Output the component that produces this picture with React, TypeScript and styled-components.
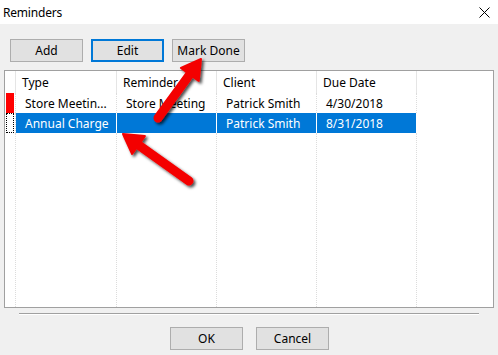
import styled, { createGlobalStyle } from "styled-components";

const GlobalStyle = createGlobalStyle`
  html, body {
    margin: 0;
    padding: 0;
    background: #f0f0f0;
  }
  body {
    font-family: "Noto Sans", "Liberation Sans", sans-serif;
    font-size: 12px;
    color: #000;
  }
`;

const Window = styled.div`
  position: relative;
  width: 498px;
  height: 355px;
  display: flex;
  flex-direction: column;
  background: #f0f0f0;
  overflow: hidden;
`;

const TitleBar = styled.div`
  height: 24px;
  background: #fff;
  display: flex;
  align-items: center;
  justify-content: space-between;
  padding: 0 8px 0 3px;
`;

const Title = styled.span`
  font-size: 12px;
  letter-spacing: -0.2px;
`;

const Body = styled.div`
  flex: 1;
  display: flex;
  flex-direction: column;
  padding: 15px 4px 0 4px;
`;

const Toolbar = styled.div`
  display: flex;
  gap: 8px;
  padding-left: 6px;
`;

interface ButtonProps {
  $focused?: boolean;
}

const Button = styled.button<ButtonProps>`
  box-sizing: border-box;
  width: 73px;
  height: 23px;
  padding: 0;
  background: #e1e1e1;
  border: ${(p) => (p.$focused ? "2px solid #0078d7" : "1px solid #adadad")};
  font-family: "Noto Sans", "Liberation Sans", sans-serif;
  font-size: 12px;
  color: #000;
`;

const Grid = styled.div`
  box-sizing: border-box;
  margin-top: 8px;
  height: 238px;
  border: 1px solid #a0a0a0;
  background: #fff;
  display: flex;
  flex-direction: column;
`;

interface RowProps {
  $height?: number;
  $fill?: boolean;
}

const Row = styled.div<RowProps>`
  display: flex;
  height: ${(p) => (p.$height ? `${p.$height}px` : "auto")};
  flex: ${(p) => (p.$fill ? 1 : "none")};
`;

interface CellProps {
  $width?: number;
  $header?: boolean;
  $selected?: boolean;
}

const Cell = styled.div<CellProps>`
  box-sizing: border-box;
  width: ${(p) => (p.$width ? `${p.$width}px` : "auto")};
  flex: ${(p) => (p.$width ? "none" : 1)};
  display: flex;
  align-items: center;
  padding-left: ${(p) => (p.$header ? 6 : 9)}px;
  white-space: nowrap;
  overflow: hidden;
  border-right: ${(p) =>
    p.$header
      ? "1px solid #e5e5e5"
      : p.$selected
      ? "1px solid #fff"
      : "1px dotted #dcdcdc"};
  background: ${(p) => (p.$selected ? "#0078d7" : "transparent")};
  color: ${(p) => (p.$selected ? "#fff" : "#000")};
  &:last-child {
    border-right: none;
  }
`;

interface MarkerProps {
  $kind?: "red" | "focus" | "none" | "header";
}

const Marker = styled.div<MarkerProps>`
  box-sizing: border-box;
  width: 11px;
  flex: none;
  position: relative;
  border-right: ${(p) =>
    p.$kind === "header" ? "1px solid #e5e5e5" : "1px dotted #dcdcdc"};
  &::after {
    content: "";
    position: absolute;
    left: 1px;
    right: 1px;
    top: 0;
    bottom: 0;
    background: ${(p) => (p.$kind === "red" ? "#ff0000" : "transparent")};
    border: ${(p) => (p.$kind === "focus" ? "1px dotted #000" : "none")};
  }
`;

const Separator = styled.div`
  margin: 5px 15px 0 15px;
  height: 1px;
  background: #a0a0a0;
  border-bottom: 1px solid #fff;
`;

const Footer = styled.div`
  display: flex;
  justify-content: center;
  gap: 13px;
  margin-top: 12px;
  padding-left: 1px;
`;

const Overlay = styled.svg`
  position: absolute;
  left: 0;
  top: 0;
  pointer-events: none;
`;

const cols = [101, 100, 100, 100];

const rows = [
  { marker: "red" as const, selected: false, cells: ["Store Meetin...", "Store Meeting", "Patrick Smith", "4/30/2018"] },
  { marker: "focus" as const, selected: true, cells: ["Annual Charge", "", "Patrick Smith", "8/31/2018"] },
];

const Arrow = ({ tail, tip }: { tail: [number, number]; tip: [number, number] }) => {
  const dx = tip[0] - tail[0];
  const dy = tip[1] - tail[1];
  const len = Math.hypot(dx, dy);
  const ux = dx / len;
  const uy = dy / len;
  const px = -uy;
  const py = ux;
  const headLen = 19;
  const halfW = 11;
  const bx = tip[0] - ux * headLen;
  const by = tip[1] - uy * headLen;
  const sx = tip[0] - ux * (headLen - 3);
  const sy = tip[1] - uy * (headLen - 3);
  return (
    <g filter="url(#shadow)">
      <line x1={tail[0]} y1={tail[1]} x2={sx} y2={sy} stroke="#f40000" strokeWidth={9} strokeLinecap="round" />
      <polygon
        points={`${tip[0]},${tip[1]} ${bx + px * halfW},${by + py * halfW} ${bx - px * halfW},${by - py * halfW}`}
        fill="#f40000"
        stroke="#f40000"
        strokeWidth={2}
        strokeLinejoin="round"
      />
    </g>
  );
};

export default function App() {
  return (
    <>
      <GlobalStyle />
      <Window>
        <TitleBar>
          <Title>Reminders</Title>
          <svg width="11" height="11" viewBox="0 0 11 11">
            <path d="M0.5 0.5 L10.5 10.5 M10.5 0.5 L0.5 10.5" stroke="#000" strokeWidth="1" />
          </svg>
        </TitleBar>
        <Body>
          <Toolbar>
            <Button>Add</Button>
            <Button $focused>Edit</Button>
            <Button>Mark Done</Button>
          </Toolbar>
          <Grid>
            <Row $height={22}>
              <Marker $kind="header" />
              <Cell $width={cols[0]} $header>Type</Cell>
              <Cell $width={cols[1]} $header>Reminder</Cell>
              <Cell $width={cols[2]} $header>Client</Cell>
              <Cell $width={cols[3]} $header>Due Date</Cell>
              <Cell />
            </Row>
            {rows.map((r, i) => (
              <Row key={i} $height={20}>
                <Marker $kind={r.marker} />
                {r.cells.map((c, j) => (
                  <Cell key={j} $width={cols[j]} $selected={r.selected}>
                    {c}
                  </Cell>
                ))}
                <Cell />
              </Row>
            ))}
            <Row $fill>
              <Marker $kind="none" />
              {cols.map((w, j) => (
                <Cell key={j} $width={w} />
              ))}
              <Cell />
            </Row>
          </Grid>
          <Separator />
          <Footer>
            <Button>OK</Button>
            <Button>Cancel</Button>
          </Footer>
        </Body>
        <Overlay width="498" height="355">
          <defs>
            <filter id="shadow" x="-30%" y="-30%" width="160%" height="160%">
              <feDropShadow dx="2" dy="2" stdDeviation="1.5" floodColor="#000" floodOpacity="0.7" />
            </filter>
          </defs>
          <Arrow tail={[158, 118]} tip={[201, 59]} />
          <Arrow tail={[189, 181]} tip={[123, 134]} />
        </Overlay>
      </Window>
    </>
  );
}
